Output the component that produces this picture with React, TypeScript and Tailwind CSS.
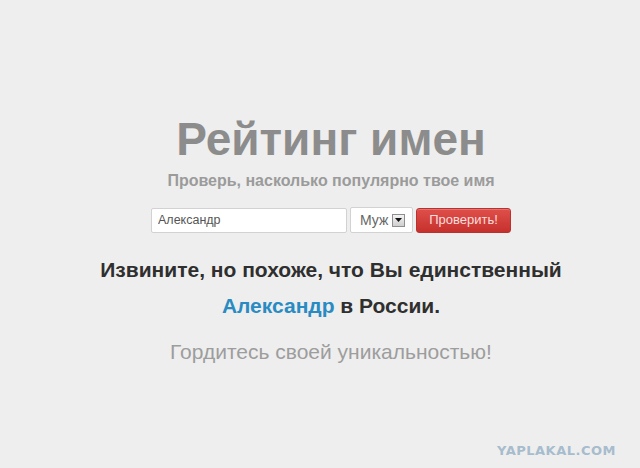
import React from "react";

function SelectArrow(): React.JSX.Element {
  return (
    <span className="ml-[4px] flex h-[13px] w-[13px] items-center justify-center border border-[#8f8f8f] bg-gradient-to-b from-[#f4f4f4] to-[#cfcfcf]">
      <svg width="7" height="4" viewBox="0 0 7 4">
        <path d="M0 0h7L3.5 4z" fill="#111" />
      </svg>
    </span>
  );
}

export default function App(): React.JSX.Element {
  return (
    <div className="flex min-h-[468px] w-[640px] flex-col bg-[#eeeeee] font-['Liberation_Sans',Arial,sans-serif]">
      <main className="flex flex-col items-center pl-[22px] pt-[116px]">
        <h1 className="text-[46px] font-bold leading-[46px] text-[#8c8c8c]">Рейтинг имен</h1>
        <p className="mt-[10px] text-[16px] font-bold leading-[18px] text-[#9b9b9b]">
          Проверь, насколько популярно твое имя
        </p>

        <form className="mt-[17px] flex items-center gap-[3px]" onSubmit={(e) => e.preventDefault()}>
          <input
            defaultValue="Александр"
            className="h-[25px] w-[196px] rounded-[2px] border border-[#d2d2d2] bg-white px-[6px] text-[12.5px] text-[#555] outline-none"
          />
          <div className="flex h-[26px] w-[63px] items-center rounded-[2px] border border-[#d2d2d2] bg-white pl-[9px] text-[14px] text-[#666]">
            Муж
            <SelectArrow />
          </div>
          <button
            type="submit"
            className="h-[25px] w-[95px] rounded-[3px] border border-[#b8332f] bg-gradient-to-b from-[#df4f4a] to-[#c6302c] text-[13px] text-[#fbdede] shadow-[inset_0_1px_0_rgba(255,255,255,0.2)]"
          >
            Проверить!
          </button>
        </form>

        <div className="mt-[19px] flex flex-col items-center text-[21px] font-bold leading-[36px] text-[#2f2f2f]">
          <p>Извините, но похоже, что Вы единственный</p>
          <p>
            <span className="text-[#2a8bc2]">Александр</span> в России.
          </p>
        </div>

        <p className="mt-[16px] text-[21px] leading-[24px] text-[#9d9d9d]">Гордитесь своей уникальностью!</p>
      </main>

      <div className="mt-auto self-end pb-[11px] pr-[24px] font-['DejaVu_Sans',sans-serif] text-[13px] font-bold leading-[13px] tracking-[0.5px] text-[#a7bccd]">
        YAPLAKAL.COM
      </div>
    </div>
  );
}
